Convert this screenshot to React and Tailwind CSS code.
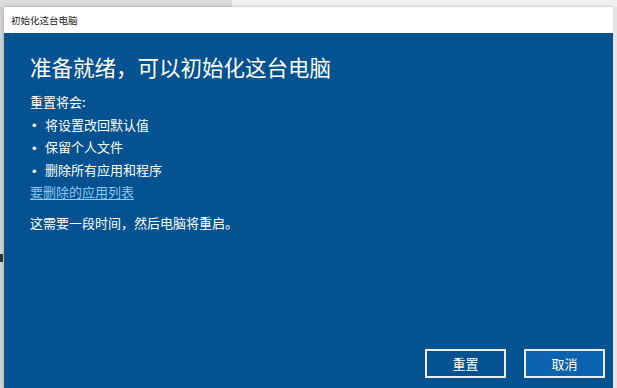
import React from 'react';

const font = { fontFamily: '"Noto Sans CJK SC", "Noto Sans", sans-serif' };

const items = ['将设置改回默认值', '保留个人文件', '删除所有应用和程序'];

const App = () => {
  return (
    <div className="w-[617px] h-[388px] overflow-hidden flex flex-col bg-[#e6e6e6]" style={font}>
      <div className="h-[7px] flex">
        <div className="w-[232px] bg-[#dcdcdc]" />
        <div className="flex-1 bg-[#f2f2f2]" />
      </div>
      <div className="flex-1 flex min-h-0">
        <div className="w-[4px] bg-[#d4d4d4] flex flex-col">
          <div className="h-[247px]" />
          <div className="h-[8px] w-[3px] bg-[#333]" />
        </div>
        <div className="flex-1 flex flex-col shadow-[0_0_4px_rgba(0,0,0,0.25)]">
          <div className="h-[26px] bg-white flex items-center pl-[7px] text-[9.5px] text-[#222]">
            初始化这台电脑
          </div>
          <div className="flex-1 bg-[#04528f] flex flex-col pl-[26px] pr-[8px] pt-[19px] pb-[10px] text-white">
            <h1 className="text-[21.5px] leading-[30px] font-normal">准备就绪，可以初始化这台电脑</h1>
            <div className="mt-[9px] text-[13px] leading-[22.6px]">
              <div>重置将会:</div>
              {items.map((t) => (
                <div key={t} className="flex items-center pl-[2px]">
                  <span className="w-[13px] leading-none translate-y-[1px] text-[13px] font-['Liberation_Sans',sans-serif]">•</span>
                  <span>{t}</span>
                </div>
              ))}
              <div className="text-[#8ec8f5] underline underline-offset-2">要删除的应用列表</div>
              <div className="mt-[8px]">这需要一段时间，然后电脑将重启。</div>
            </div>
            <div className="mt-auto flex justify-end gap-[18px]">
              <button className="w-[81px] h-[29px] border-2 border-[#e8eef4] bg-[#04528f] text-[13px] text-white">重置</button>
              <button className="w-[81px] h-[29px] border-2 border-[#e8eef4] bg-[#0b62ae] text-[13px] text-white">取消</button>
            </div>
          </div>
        </div>
        <div className="w-[4px] bg-[#e4e4e4]" />
      </div>
    </div>
  );
};

export default App;
